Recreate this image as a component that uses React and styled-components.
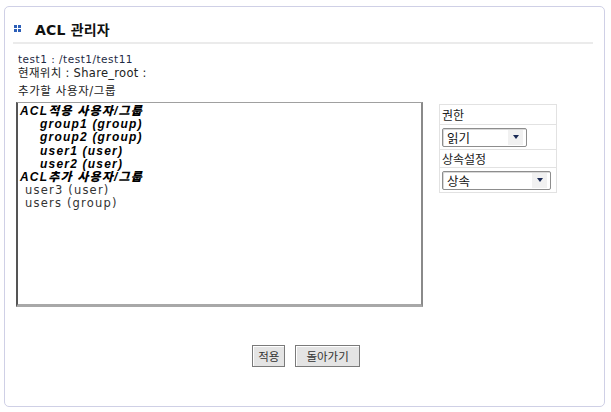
import React from 'react'
import styled, { createGlobalStyle } from 'styled-components'

const GlobalStyle = createGlobalStyle`
  html, body {
    margin: 0;
    padding: 0;
    background: #ffffff;
  }
  body {
    font-family: "DejaVu Sans", "Noto Sans CJK KR", sans-serif;
    color: #222;
  }
`

const Page = styled.div`
  width: 611px;
  height: 412px;
  padding: 6px 0 0 4px;
  box-sizing: border-box;
`

const Panel = styled.div`
  width: 601px;
  height: 401px;
  box-sizing: border-box;
  border: 1px solid #cfd0e6;
  border-radius: 5px;
  padding: 0 11px 0 8px;
  display: flex;
  flex-direction: column;
`

const Header = styled.div`
  height: 37px;
  display: flex;
  align-items: center;
  padding-top: 8px;
  box-sizing: border-box;
  border-bottom: 2px solid #ebebeb;
`

const Dots = styled.svg`
  width: 7px;
  height: 7px;
  margin: 0 0 0 1px;
`

const Title = styled.h1`
  margin: 0 0 0 14px;
  font-size: 14px;
  font-weight: bold;
  color: #111;
  font-family: "DejaVu Sans", "Noto Sans CJK KR", sans-serif;
  letter-spacing: 0.2px;
`

const Info = styled.div`
  padding: 8px 0 0 5px;
  display: flex;
  flex-direction: column;
`

const InfoLine = styled.div`
  font-size: ${p => (p.$small ? '10.5px' : '11.5px')};
  letter-spacing: ${p => (p.$ls || 0)}px;
  line-height: ${p => p.$h}px;
  color: ${p => (p.$small ? '#1e2a44' : '#222')};
  white-space: nowrap;
`

const Body = styled.div`
  display: flex;
  align-items: flex-start;
  margin-top: 1px;
  padding-left: 3px;
`

const ListBox = styled.div`
  width: 407px;
  height: 205px;
  box-sizing: border-box;
  border-style: solid;
  border-width: 1px 2px 3px 2px;
  border-color: #a0a0a0 #8a8a8a #a8a8a8 #555;
  padding: 2px 0 0 2px;
  display: flex;
  flex-direction: column;
`

const Item = styled.div`
  font-family: ${p => (p.$bold ? '"Liberation Sans", "Noto Sans CJK KR", sans-serif' : '"DejaVu Sans", "Noto Sans CJK KR", sans-serif')};
  font-size: ${p => (p.$bold ? '12px' : '11.5px')};
  font-weight: ${p => (p.$bold ? 900 : 400)};
  font-style: ${p => (p.$bold ? 'italic' : 'normal')};
  letter-spacing: 1.2px;
  line-height: 13.2px;
  padding-left: ${p => p.$indent}px;
  color: ${p => (p.$bold ? '#000' : '#333')};
  white-space: nowrap;
`

const Side = styled.div`
  margin: 2px 0 0 16px;
  width: 116px;
  border: 1px solid #e2e2e2;
  display: flex;
  flex-direction: column;
`

const SideRow = styled.div`
  height: ${p => p.$h}px;
  box-sizing: border-box;
  border-top: ${p => (p.$first ? 'none' : '1px solid #e2e2e2')};
  display: flex;
  align-items: center;
  padding-left: 2px;
  font-size: 12px;
  color: #222;
  font-family: "Noto Sans CJK KR", sans-serif;
`

const Select = styled.div`
  width: ${p => p.$w}px;
  height: 19px;
  box-sizing: border-box;
  border: 1px solid #8d8d8d;
  border-radius: 2px;
  box-shadow: inset 1px 1px 0 #d8d8d8;
  display: flex;
  align-items: center;
  justify-content: space-between;
  padding: 0 3px 0 4px;
  font-size: 12.5px;
  font-family: "Noto Sans CJK KR", sans-serif;
  color: #111;
  background: #fff;
`

const Arrow = styled.span`
  width: 15px;
  height: 15px;
  background: #f1f1f1;
  display: flex;
  align-items: center;
  justify-content: center;
  &::after {
    content: '';
    border-left: 3px solid transparent;
    border-right: 3px solid transparent;
    border-top: 4px solid #1a2a55;
  }
`

const Actions = styled.div`
  margin-top: 38px;
  display: flex;
  justify-content: center;
  gap: 10px;
  padding-left: 6px;
`

const Button = styled.button`
  height: 22px;
  padding: 0 ${p => p.$pad}px;
  border: 1px solid #7a7a7a;
  box-shadow: inset 1px 1px 0 #ffffff;
  background: #e4e4e4;
  font-family: "Noto Sans CJK KR", sans-serif;
  font-size: 11.5px;
  color: #333;
  cursor: pointer;
`

const items = [
  { text: 'ACL적용 사용자/그룹', bold: true, indent: 0 },
  { text: 'group1 (group)', bold: true, indent: 20 },
  { text: 'group2 (group)', bold: true, indent: 20 },
  { text: 'user1 (user)', bold: true, indent: 20 },
  { text: 'user2 (user)', bold: true, indent: 20 },
  { text: 'ACL추가 사용자/그룹', bold: true, indent: 0 },
  { text: 'user3 (user)', bold: false, indent: 5 },
  { text: 'users (group)', bold: false, indent: 5 }
]

class App extends React.Component {
  render() {
    return (
      <Page>
        <GlobalStyle />
        <Panel>
          <Header>
            <Dots viewBox="0 0 7 7">
              <rect x="0" y="0" width="3" height="3" fill="#2c5fb8" />
              <rect x="4" y="0" width="3" height="3" fill="#2c5fb8" />
              <rect x="0" y="4" width="3" height="3" fill="#2c5fb8" />
              <rect x="4" y="4" width="3" height="3" fill="#2c5fb8" />
            </Dots>
            <Title>ACL 관리자</Title>
          </Header>
          <Info>
            <InfoLine $small $ls={0.5} $h={14}>test1 : /test1/test11</InfoLine>
            <InfoLine $ls={0.3} $h={15}>현재위치 : Share_root :</InfoLine>
            <InfoLine $ls={0.6} $h={20}>추가할 사용자/그룹</InfoLine>
          </Info>
          <Body>
            <ListBox>
              {items.map((it, i) => (
                <Item key={i} $bold={it.bold} $indent={it.indent}>
                  {it.text}
                </Item>
              ))}
            </ListBox>
            <Side>
              <SideRow $first $h={19}>권한</SideRow>
              <SideRow $h={25}>
                <Select $w={85}>
                  읽기
                  <Arrow />
                </Select>
              </SideRow>
              <SideRow $h={18}>상속설정</SideRow>
              <SideRow $h={25}>
                <Select $w={109}>
                  상속
                  <Arrow />
                </Select>
              </SideRow>
            </Side>
          </Body>
          <Actions>
            <Button $pad={5}>적용</Button>
            <Button $pad={10}>돌아가기</Button>
          </Actions>
        </Panel>
      </Page>
    )
  }
}

export default App
